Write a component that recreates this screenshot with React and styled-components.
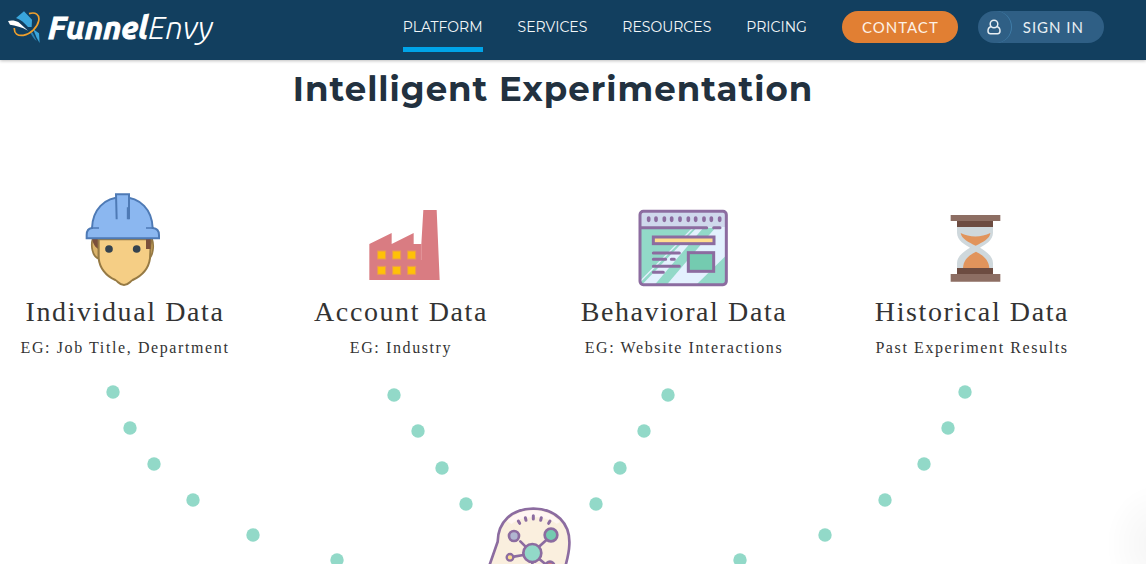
import styled, { createGlobalStyle } from 'styled-components'


const GlobalStyle = createGlobalStyle`
    * {
        box-sizing: border-box;
    }
    body {
        margin: 0;
        background-color: white;
        overflow-x: hidden;
    }
`;

const Container = styled.div`
    height: 100vh;
    overflow: hidden;
    display: flex;
    flex-direction: column;
`;

const Header = styled.header`
    flex-shrink: 0;
    height: 60px;
    padding: 0 42px 6px 8px;
    background-color: #123f5f;
    box-shadow: 0 1px 3px rgba(0, 0, 0, 0.25);
    display: flex;
    align-items: center;
    justify-content: space-between;
`;

const Logo = styled.a`
    display: flex;
    align-items: center;
    gap: 8px;
    color: white;
    font-family: Ubuntu, 'Open Sans', sans-serif;
    font-size: 32px;
    line-height: 40px;
    font-style: italic;
    font-weight: 300;
    text-decoration: none;
`;

const LogoBold = styled.span`
    font-weight: 700;
    -webkit-text-stroke: 1px white;
`;

const Right = styled.div`
    display: flex;
    align-items: center;
    gap: 20px;
`;

const Nav = styled.nav`
    display: flex;
    gap: 35px;
    margin-right: 15px;
`;

const NavLink = styled.a`
    padding: 13px 0 8px;
    border-bottom: 5px solid ${props => props.$active ? '#00a4e8' : 'transparent'};
    color: #f2f6f8;
    font-family: Montserrat, Lato, sans-serif;
    font-size: 14px;
    line-height: 24px;
    text-decoration: none;
`;

const Button = styled.button`
    height: 32px;
    padding: 0 19px 0 20px;
    border: none;
    border-radius: 16px;
    background-color: #e17f33;
    color: #fdf1e6;
    font-family: Lato, sans-serif;
    font-size: 15px;
    letter-spacing: 1px;
    cursor: pointer;
`;

const SignIn = styled(Button)`
    padding: 0 20px 0 0;
    background-color: #2f5f85;
    color: #e9eff3;
    display: flex;
    align-items: center;
    gap: 11px;
`;

const UserCircle = styled.span`
    width: 34px;
    height: 32px;
    border-right: 1px solid #3f7da8;
    border-radius: 16px;
    display: flex;
    align-items: center;
    justify-content: center;
`;

const Main = styled.main`
    flex: 1;
    font-family: 'Liberation Serif', 'Times New Roman', serif;
    font-size: 16px;
    letter-spacing: 0.1em;
    color: #333;
`;

const Title = styled.h1`
    margin: 0;
    padding: 6px 40px 0 0;
    color: #22313f;
    font-family: Montserrat, Inter, sans-serif;
    font-size: 34px;
    line-height: 46px;
    font-weight: 700;
    letter-spacing: 1px;
    text-align: center;
`;

const Sources = styled.section`
    margin-top: 68px;
    padding-right: 18px;
    display: grid;
    grid-template-columns: 250fr 302fr 264fr 312fr;
`;

const Source = styled.article`
    display: flex;
    flex-direction: column;
    align-items: center;
    white-space: nowrap;
`;

const SourceTitle = styled.h2`
    margin: -4px 0 0;
    font-size: 28px;
    line-height: 32px;
    font-weight: 400;
`;

const SourceText = styled.p`
    margin: 0;
    padding-top: 10px;
    line-height: 20px;
`;

const Flow = styled.svg`
    display: block;
    width: 100%;
    margin-top: 16px;
`;

const ChatGlow = styled.div`
    position: fixed;
    right: -60px;
    bottom: -40px;
    width: 100px;
    height: 120px;
    background: radial-gradient(closest-side, rgba(0, 0, 0, 0.04), transparent);
`;

const LogoMark = () => (
  <svg width="32" height="36" viewBox="24 30 96 108" aria-hidden="true">
    <path d="M48 57 L72 37 L96 62 L95 84 L84 84 C74 72 62 62 48 57 Z" fill="#3aa6dc" />
    <path d="M24 66 C34 63 46 64 56 70 L84 95 C66 84 46 79 30 77 Z" fill="white" />
    <path d="M99 90 L117 103 L119 132 L110 116 Z" fill="#3aa6dc" />
    <path d="M91 99 L98 101 L110 126 C101 119 95 111 91 99 Z" fill="#2b82b5" />
    <path d="M87 44 C106 38 120 46 116 66 C112 85 92 105 70 109 C53 111 42 104 43 87" fill="none" stroke="#f0a02c" strokeWidth="5" />
  </svg>
)

const UserIcon = () => (
  <svg width="14" height="16" viewBox="0 0 14 16" fill="none" stroke="currentColor" strokeWidth="1.5" aria-hidden="true">
    <circle cx="7" cy="5" r="3.8" />
    <path d="M4.3 7.6 C2 8.2 1 10 1 12 C1 13.8 1.8 14.7 3.4 14.7 H10.6 C12.2 14.7 13 13.8 13 12 C13 10 12 8.2 9.7 7.6" />
  </svg>
)

const Worker = () => (
  <svg width="130" height="120" viewBox="0 0 390 360" aria-hidden="true">
    <path d="M98 176 C92 195 96 230 116 236 V176 Z M276 176 C283 195 280 230 264 238 V176 Z" fill="#dbb36a" stroke="#967a44" strokeWidth="5" />
    <path d="M97 176 H118 V208 C106 204 98 190 97 176 Z M258 176 H277 C276 190 270 202 268 208 H258 Z" fill="#7a4f3b" />
    <path d="M116 178 V235 C119 263 137 288 166 300 C176 306 178 315 192 315 C206 315 208 306 218 300 C244 288 266 265 270 235 L273 178 Z" fill="#f5ce85" stroke="#967a44" strokeWidth="6" />
    <rect x="258" y="176" width="14" height="31" fill="#7a4f3b" />
    <circle cx="147" cy="207" r="11.5" fill="#35434f" />
    <circle cx="230" cy="207" r="11.5" fill="#35434f" />
    <path d="M96 144 C98 90 132 52 187 52 C242 52 276 90 278 144 C292 145 297 153 297 165 V175 H80 V165 C80 153 86 145 96 144 Z" fill="#8bb7f0" stroke="#4e7ab5" strokeWidth="6" />
    <path d="M170 118 L168 43 H207 V118" fill="#8bb7f0" stroke="#4e7ab5" strokeWidth="6" />
    <path d="M203 82 V118 M94 144 H117 M258 144 H281" fill="none" stroke="#4e7ab5" strokeWidth="5" />
  </svg>
)

const Factory = () => (
  <svg width="130" height="120" viewBox="-42 -30 390 360" aria-hidden="true">
    <path d="M58 270 V162 L125 129 V162 L191 129 V162 H214 L220 60 H260 L269 270 Z" fill="#d97c82" />
    <path d="M214 162 V210" stroke="#e8a5a9" strokeWidth="2" />
    {[195, 241].map(y => [95, 140, 185].map(x => (
      <rect key={`${x}-${y}`} x={x - 12} y={y - 12} width="24" height="24" fill="#ffc107" stroke="#ea9a52" strokeWidth="3" />
    )))}
  </svg>
)

const Browser = () => (
  <svg width="130" height="120" viewBox="-3 -45 390 360" aria-hidden="true">
    <rect x="60" y="49" width="259" height="220" rx="9" fill="#e3f1fe" />
    <path d="M63 98 H230 L68 267 H63 Z" fill="#92d9c8" />
    <path d="M220 98 L63 257" stroke="#e3f1fe" strokeWidth="4" />
    <path d="M250 98 H286 L142 267 H106 Z" fill="#92d9c8" />
    <path d="M316 184 V267 H231 Z" fill="#92d9c8" />
    <rect x="63" y="52" width="253" height="44" fill="#cfd8ec" />
    <g fill="none" stroke="#8c6ca0" strokeWidth="9" strokeLinecap="round">
      <rect x="60" y="49" width="259" height="220" rx="10" />
      <path d="M63 98 H260 M281 98 H300" />
      <path d="M100 174 H178 M100 193 H137 M154 193 H163 M100 214 H178 M100 232 H130" />
      <path d="M86 69 V76 M108 69 V76 M133 69 V76 M155 69 V76 M180 69 V76 M205 69 V76 M227 69 V76 M252 69 V76 M274 69 V76 M299 69 V76" strokeWidth="11" />
    </g>
    <rect x="100" y="126" width="182" height="20" fill="#ffdd8e" stroke="#8c6ca0" strokeWidth="9" />
    <rect x="205" y="173" width="76" height="56" fill="#74cbb0" stroke="#8c6ca0" strokeWidth="9" />
  </svg>
)

const Hourglass = () => (
  <svg width="130" height="120" viewBox="-69 -60 390 360" aria-hidden="true">
    <path d="M81 81 H189 V98 C189 122 164 134 150 143 C164 152 189 166 189 190 V204 H81 V190 C81 166 106 152 120 143 C106 134 81 122 81 98 Z" fill="#cfd8dc" />
    <path d="M92 99 C118 113 154 113 181 99 C180 116 158 127 137 137 C116 127 94 116 92 99 Z" fill="#e1945c" />
    <path d="M99 204 C100 180 116 166 138 155 C160 166 176 180 178 204 Z" fill="#e1945c" />
    <path d="M81 63 H189 V81 H81 Z M81 204 H189 V222 H81 Z" fill="#6d4c41" />
    <path d="M62 45 H211 V63 H62 Z M62 222 H211 V245 H62 Z" fill="#8d6e63" />
  </svg>
)

const Brain = () => (
  <g transform="translate(470 116) scale(0.3333)" stroke="#8c6ca0" strokeWidth="8" strokeLinecap="round">
    <path d="M50 250 L83 155 C84 95 125 56 190 56 C258 56 302 100 298 165 C297 195 290 215 280 250" fill="#faefde" />
    <path d="M110 94 C132 72 158 62 190 61 C224 62 250 74 270 96 L260 101 C235 85 215 82 190 82 C165 82 142 88 125 102 Z" fill="#fff6f2" stroke="none" />
    <path d="M145 93 L149 100 M166 83 L168 91 M190 77 V87 M214 83 L212 91 M240 93 L236 100" strokeWidth="9" />
    <path d="M151 154 L169 172 M206 171 L230 149 M132 200 L160 195 M208 207 L226 222" />
    <circle cx="132" cy="138" r="15" fill="#b0b6d0" />
    <circle cx="243" cy="135" r="19" fill="#74cbb0" />
    <circle cx="120" cy="202" r="10" fill="#ffdd8e" strokeWidth="7" />
    <circle cx="240" cy="228" r="13" fill="#d97c82" />
    <path d="M187 212 V235" />
    <circle cx="187" cy="189" r="27" fill="#92d9c8" />
  </g>
)

const sources = [
  { title: 'Individual Data', text: 'EG: Job Title, Department', icon: <Worker /> },
  { title: 'Account Data', text: 'EG: Industry', icon: <Factory /> },
  { title: 'Behavioral Data', text: 'EG: Website Interactions', icon: <Browser /> },
  { title: 'Historical Data', text: 'Past Experiment Results', icon: <Hourglass /> },
]

const dots = [
  [113, 18], [130, 54], [154, 90], [193, 126], [253, 161], [337, 186],
  [394, 21], [418, 57], [442, 94], [466, 130],
  [668, 21], [644, 57], [620, 94], [596, 130],
  [965, 18], [948, 54], [924, 90], [885, 126], [825, 161], [740, 186],
]

const App = () => {
  return (
    <Container>
      <GlobalStyle />
      <Header>
        <Logo href="#">
          <LogoMark />
          <span><LogoBold>Funnel</LogoBold>Envy</span>
        </Logo>
        <Right>
          <Nav>
            <NavLink href="#" $active>PLATFORM</NavLink>
            <NavLink href="#">SERVICES</NavLink>
            <NavLink href="#">RESOURCES</NavLink>
            <NavLink href="#">PRICING</NavLink>
          </Nav>
          <Button>CONTACT</Button>
          <SignIn>
            <UserCircle><UserIcon /></UserCircle>
            SIGN IN
          </SignIn>
        </Right>
      </Header>
      <Main>
        <Title>Intelligent Experimentation</Title>
        <Sources>
          {sources.map(source => (
            <Source key={source.title}>
              {source.icon}
              <SourceTitle>{source.title}</SourceTitle>
              <SourceText>{source.text}</SourceText>
            </Source>
          ))}
        </Sources>
        <Flow viewBox="0 0 1146 190" aria-hidden="true">
          {dots.map(([x, y]) => (
            <circle key={`${x}-${y}`} cx={x} cy={y} r="6.7" fill="#92d9c8" />
          ))}
          <Brain />
        </Flow>
      </Main>
      <ChatGlow />
    </Container>
  )
}

export default App
